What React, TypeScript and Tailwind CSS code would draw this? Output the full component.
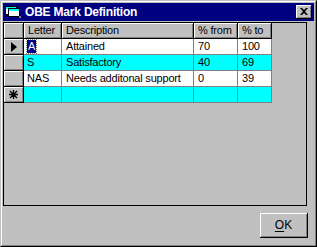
import React from 'react';

type Row = {
  letter: string;
  description: string;
  from: string;
  to: string;
  bg: string;
  marker?: 'current' | 'new';
};

const rows: Row[] = [
  { letter: 'A', description: 'Attained', from: '70', to: '100', bg: 'bg-white', marker: 'current' },
  { letter: 'S', description: 'Satisfactory', from: '40', to: '69', bg: 'bg-[#00ffff]' },
  { letter: 'NAS', description: 'Needs additonal support', from: '0', to: '39', bg: 'bg-white' },
  { letter: '', description: '', from: '', to: '', bg: 'bg-[#00ffff]', marker: 'new' },
];

const raised = 'shadow-[inset_1px_1px_0_#ffffff,inset_-1px_-1px_0_#808080]';

function WindowIcon() {
  return (
    <svg width="16" height="12" viewBox="0 0 16 12" className="shrink-0">
      <rect x="0.5" y="0.5" width="11" height="8" fill="#ffffff" stroke="#000000" />
      <rect x="1" y="1" width="10" height="2" fill="#00ffff" />
      <rect x="3.5" y="2.5" width="11" height="8" fill="#ffffff" stroke="#000000" />
      <rect x="4" y="3" width="10" height="2" fill="#00ffff" />
      <rect x="14" y="10" width="2" height="2" fill="#808080" />
    </svg>
  );
}

function CloseButton() {
  return (
    <div className={`w-4 h-[14px] bg-[#c0c0c0] border-r border-b border-black flex items-center justify-center ${raised}`}>
      <svg width="8" height="7" viewBox="0 0 8 7">
        <path d="M0 0 L2 0 L4 2 L6 0 L8 0 L5 3.5 L8 7 L6 7 L4 5 L2 7 L0 7 L3 3.5 Z" fill="#000000" />
      </svg>
    </div>
  );
}

function Selector({ marker }: { marker?: Row['marker'] }) {
  return (
    <div className={`w-[20px] h-full bg-[#c0c0c0] border-r border-b border-black flex items-center justify-center ${raised}`}>
      {marker === 'current' && (
        <svg width="6" height="10" viewBox="0 0 6 10">
          <path d="M0 0 L6 5 L0 10 Z" fill="#000000" />
        </svg>
      )}
      {marker === 'new' && (
        <svg width="9" height="9" viewBox="0 0 9 9">
          <path d="M4.5 0 V9 M0 4.5 H9 M1 1 L8 8 M8 1 L1 8" stroke="#000000" strokeWidth="1.3" />
        </svg>
      )}
    </div>
  );
}

export default function App() {
  return (
    <div className="w-[317px] h-[247px] bg-[#c0c0c0] border-l border-t border-r border-b border-l-[#c0c0c0] border-t-[#c0c0c0] border-r-black border-b-black font-['Liberation_Sans',Arial,sans-serif] text-[11px] text-black">
      <div className="w-full h-full border border-l-white border-t-white border-r-[#808080] border-b-[#808080] p-px flex flex-col">
        <div className="h-[18px] bg-[#000080] flex items-center pl-[2px] pr-[2px] gap-[4px]">
          <WindowIcon />
          <span className="text-white font-bold text-[12px] tracking-[-0.2px] flex-1">OBE Mark Definition</span>
          <CloseButton />
        </div>

        <div className="mt-px w-[304px] h-[184px] border border-black bg-[#c0c0c0] flex flex-col tracking-[-0.2px]">
          <div className="flex h-[16px]">
            <Selector />
            {[
              ['Letter', 'w-[38px]'],
              ['Description', 'w-[132px]'],
              ['% from', 'w-[44px]'],
              ['% to', 'w-[34px]'],
            ].map(([label, w]) => (
              <div key={label} className={`${w} h-full border-r border-b border-black pl-[4px] flex items-center bg-[#c0c0c0] ${raised}`}>
                {label}
              </div>
            ))}
          </div>

          {rows.map((r, i) => (
            <div key={i} className="flex h-[16px]">
              <Selector marker={r.marker} />
              <div className={`w-[38px] h-full border-r border-b border-[#808080] pl-[3px] flex items-center ${r.bg}`}>
                {r.marker === 'current' ? (
                  <span className="bg-[#000080] text-white px-px leading-[13px] outline outline-1 outline-dotted outline-[#808080]">{r.letter}</span>
                ) : (
                  r.letter
                )}
              </div>
              <div className={`w-[132px] h-full border-r border-b border-[#808080] pl-[4px] flex items-center ${r.bg}`}>{r.description}</div>
              <div className={`w-[44px] h-full border-r border-b border-[#808080] pl-[4px] flex items-center ${r.bg}`}>{r.from}</div>
              <div className={`w-[34px] h-full border-r border-b border-[#808080] pl-[4px] flex items-center ${r.bg}`}>{r.to}</div>
            </div>
          ))}
        </div>

        <div className="flex justify-end pr-[6px] mt-[7px]">
          <button className={`w-[48px] h-[25px] bg-[#c0c0c0] border-r border-b border-black ${raised} text-[12px]`}>
            <span className="underline underline-offset-2">O</span>K
          </button>
        </div>
      </div>
    </div>
  );
}
